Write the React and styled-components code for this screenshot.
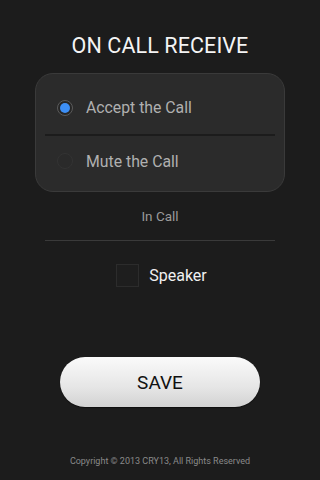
import React, { useState } from 'react'
import styled, { createGlobalStyle } from 'styled-components'

const Global = createGlobalStyle`
html, body {
    margin: 0;
    padding: 0;
    background: #1c1c1c;
}
body {
    font-family: Roboto, "Liberation Sans", sans-serif;
}
`

function App() {
    const [choice, setChoice] = useState('accept')
    const [speaker, setSpeaker] = useState(false)

    return (
        <Screen>
            <Global />
            <Title>ON CALL RECEIVE</Title>
            <Card>
                <Option top={8} onClick={() => setChoice('accept')}>
                    <Radio checked={choice === 'accept'} />
                    <Label>Accept the Call</Label>
                </Option>
                <CardDivider />
                <Option bottom={4} onClick={() => setChoice('mute')}>
                    <Radio checked={choice === 'mute'} />
                    <Label>Mute the Call</Label>
                </Option>
            </Card>
            <Section>In Call</Section>
            <Rule />
            <CheckRow onClick={() => setSpeaker(!speaker)}>
                <Box checked={speaker} />
                <CheckLabel>Speaker</CheckLabel>
            </CheckRow>
            <Save>SAVE</Save>
            <Footer>Copyright © 2013 CRY13, All Rights Reserved</Footer>
        </Screen>
    )
}

const Screen = styled.div`
width: 320px;
height: 480px;
background: #1c1c1c;
display: flex;
flex-direction: column;
align-items: center;
box-sizing: border-box;
padding-top: 33px;
`
const Title = styled.h1`
margin: 0;
font-size: 21.5px;
font-weight: 400;
color: #f4f4f4;
line-height: 26px;
letter-spacing: 0.1px;
`
const Card = styled.div`
margin-top: 14px;
width: 250px;
height: 119px;
box-sizing: border-box;
background: #2b2b2b;
border: 1px solid #3a3a3a;
border-radius: 18px;
display: flex;
flex-direction: column;
align-items: center;
`
const Option = styled.div`
width: 100%;
flex: 1;
display: flex;
align-items: center;
padding: ${p => p.top || 0}px 0 ${p => p.bottom || 0}px 21px;
box-sizing: border-box;
cursor: pointer;
`
const Radio = styled.span`
width: 16px;
height: 16px;
border-radius: 50%;
box-sizing: border-box;
border: 1px solid ${p => (p.checked ? '#5a5a5a' : '#333')};
background: ${p => (p.checked ? '#262626' : '#2a2a2a')};
display: flex;
align-items: center;
justify-content: center;

&::after{
    content: '';
    width: 10px;
    height: 10px;
    border-radius: 50%;
    background: ${p => (p.checked ? '#3d8ff5' : 'transparent')};
}
`
const Label = styled.span`
margin-left: 13px;
font-size: 15.8px;
color: #b0b0b0;
`
const CardDivider = styled.div`
width: 230px;
height: 2px;
background: #1c1c1c;
`
const Section = styled.div`
margin-top: 16px;
font-size: 13.5px;
color: #9a9a9a;
line-height: 17px;
`
const Rule = styled.div`
margin-top: 15px;
width: 230px;
height: 1px;
background: #3a3a3a;
`
const CheckRow = styled.div`
margin-top: 23px;
display: flex;
align-items: center;
cursor: pointer;
margin-left: 3px;
`
const Box = styled.span`
width: 23px;
height: 23px;
box-sizing: border-box;
background: #1e1e1e;
border: 1px solid #2c2c2c;
`
const CheckLabel = styled.span`
margin-left: 10px;
font-size: 16px;
color: #f0f0f0;
`
const Save = styled.button`
margin-top: 70px;
width: 200px;
height: 50px;
border: none;
border-radius: 25px;
background: linear-gradient(#fafafa, #e6e6e6 60%, #d2d2d2);
box-shadow: 0 1px 1px rgba(0,0,0,0.5);
font-family: Roboto, "Liberation Sans", sans-serif;
font-size: 19px;
color: #111;
cursor: pointer;
`
const Footer = styled.div`
margin-top: 49px;
font-size: 9px;
color: #8a8a8a;
`

export default App
